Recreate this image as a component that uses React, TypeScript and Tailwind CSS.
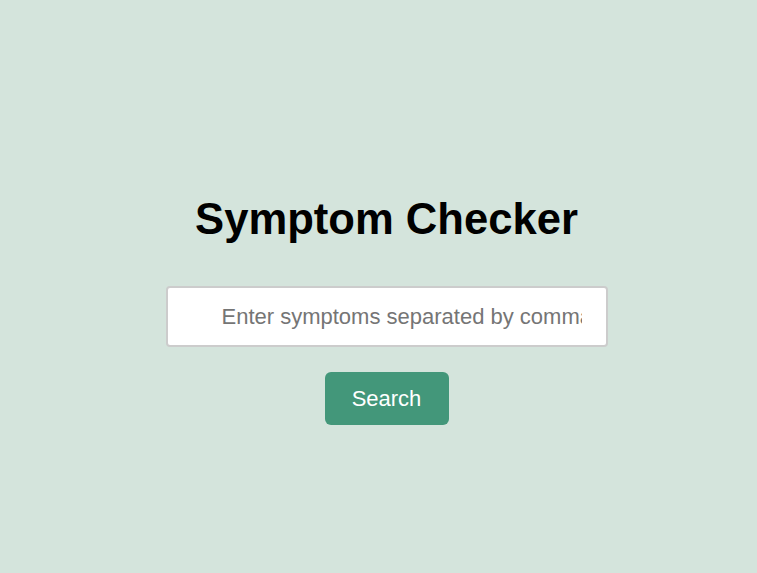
export default function App() {
  return (
    <div
      className="min-h-screen w-full bg-[#d4e4dc] flex flex-col items-center pt-[192px] pl-[16px]"
      style={{ fontFamily: '"Liberation Sans", Arial, Helvetica, sans-serif' }}
    >
      <h1 className="text-[43.6px] font-bold text-black leading-[54px]">Symptom Checker</h1>
      <input
        type="text"
        placeholder="Enter symptoms separated by commas"
        className="mt-[40px] w-[442px] h-[61px] bg-white border-2 border-[#cccccc] rounded-[4px] pl-[54px] pr-[24px] text-[22px] text-center text-black placeholder:text-[#757575] outline-none"
      />
      <button className="mt-[25px] w-[124px] h-[53px] bg-[#43977a] text-white text-[22px] rounded-[6px]">
        Search
      </button>
    </div>
  );
}
